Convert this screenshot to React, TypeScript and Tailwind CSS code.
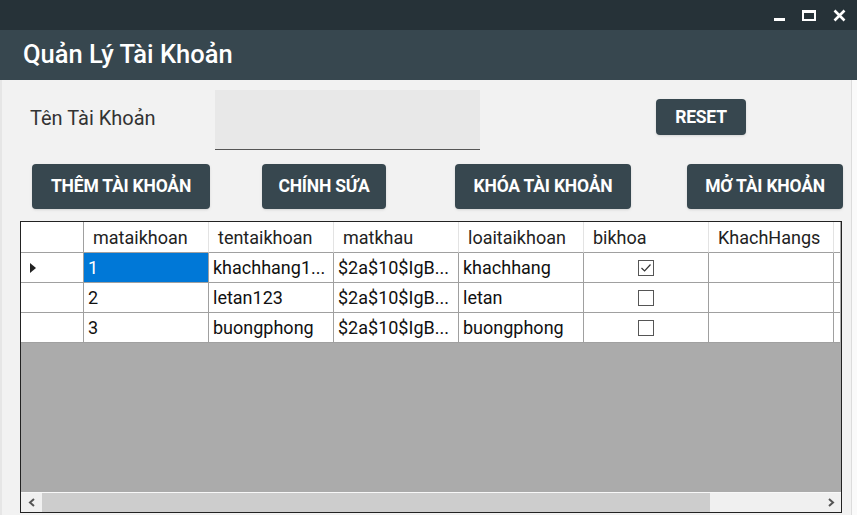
import React from "react";

const columns = ["mataikhoan", "tentaikhoan", "matkhau", "loaitaikhoan", "bikhoa", "KhachHangs"];

const rows = [
  { id: "1", ten: "khachhang1...", mk: "$2a$10$IgB...", loai: "khachhang", khoa: true },
  { id: "2", ten: "letan123", mk: "$2a$10$IgB...", loai: "letan", khoa: false },
  { id: "3", ten: "buongphong", mk: "$2a$10$IgB...", loai: "buongphong", khoa: false },
];

const Checkbox = ({ checked }: { checked: boolean }) => (
  <div className="w-[16px] h-[16px] border border-[#555] bg-white flex items-center justify-center">
    {checked && (
      <svg width="12" height="12" viewBox="0 0 12 12">
        <path d="M1.5 6 L4.6 9 L10.5 2.5" fill="none" stroke="#333" strokeWidth="1.2" />
      </svg>
    )}
  </div>
);

const Btn = ({ label, className }: { label: string; className: string }) => (
  <button
    className={`h-[45px] rounded-[4px] bg-[#37474f] text-white text-[17.5px] font-bold tracking-[-0.2px] shadow-sm flex items-center justify-center ${className}`}
  >
    {label}
  </button>
);

export default function App() {
  const cell = "border-r border-b border-[#a0a0a0] h-[30px] flex items-center px-[4px] text-[18px] text-[#111] whitespace-nowrap overflow-hidden";
  return (
    <div
      className="w-[857px] h-[515px] overflow-hidden bg-[#f2f2f2] flex flex-col relative"
      style={{ fontFamily: "Roboto, 'Noto Sans', sans-serif" }}
    >
      {/* title bar */}
      <div className="h-[30px] bg-[#263238] flex items-center justify-end pr-[11px] shrink-0">
        <div className="w-[11px] h-[3px] bg-white mt-[9px] mr-[17px]" />
        <div className="w-[14px] h-[11px] border-2 border-t-[3px] border-white mr-[17px]" />
        <svg width="13" height="13" viewBox="0 0 13 13">
          <path d="M1.5 1.5 L11.5 11.5 M11.5 1.5 L1.5 11.5" stroke="white" strokeWidth="2.6" />
        </svg>
      </div>

      {/* header */}
      <div className="h-[50px] bg-[#37474f] flex items-center pl-[23px] pb-[1px] shrink-0">
        <span className="text-white text-[25.5px] font-medium">Quản Lý Tài Khoản</span>
      </div>

      <div className="flex flex-col border-l-2 border-[#e6e6e6] flex-1 mr-[6px]">
        {/* input row */}
        <div className="flex items-start mt-[10px] h-[60px]">
          <div className="ml-[28px] w-[185px] h-[55px] flex items-center text-[20px] text-[#333]">Tên Tài Khoản</div>
          <div className="w-[265px] h-[60px] bg-[#e8e8e8] border-b border-[#555]" />
          <Btn label="RESET" className="ml-[176px] mt-[9px] w-[90px] !h-[36px]" />
        </div>

        {/* buttons row */}
        <div className="flex mt-[14px]">
          <Btn label="THÊM TÀI KHOẢN" className="ml-[30px] w-[178px]" />
          <Btn label="CHÍNH SỨA" className="ml-[52px] w-[124px]" />
          <Btn label="KHÓA TÀI KHOẢN" className="ml-[69px] w-[176px]" />
          <Btn label="MỞ TÀI KHOẢN" className="ml-[56px] w-[156px]" />
        </div>

        {/* data grid */}
        <div className="ml-[18px] mt-[12px] w-[822px] h-[292px] border border-[#222] bg-[#ababab] flex flex-col overflow-hidden">
          <div className="flex-1 overflow-hidden">
            <div className="grid grid-cols-[63px_125px_125px_125px_125px_125px_125px_6px] bg-white w-fit">
              <div className="h-[31px] border-r border-b border-[#a0a0a0]" />
              {columns.map((c) => (
                <div key={c} className="h-[31px] border-r border-b border-[#a0a0a0] border-r-[#e3e3e3] flex items-center px-[9px] text-[18px] text-[#222]">
                  {c}
                </div>
              ))}
              <div className="h-[31px] border-b border-[#a0a0a0]" />
              {rows.map((r, i) => (
                <React.Fragment key={r.id}>
                  <div className="border-r border-b border-[#a0a0a0] h-[30px] flex items-center pl-[9px]">
                    {i === 0 && (
                      <svg width="7" height="10" viewBox="0 0 7 10">
                        <path d="M0 0 L6 5 L0 10 Z" fill="#222" />
                      </svg>
                    )}
                  </div>
                  <div className={`${cell} ${i === 0 ? "bg-[#0078d7] text-white" : ""}`}>{r.id}</div>
                  <div className={cell}>{r.ten}</div>
                  <div className={cell}>{r.mk}</div>
                  <div className={cell}>{r.loai}</div>
                  <div className={`${cell} justify-center`}>
                    <Checkbox checked={r.khoa} />
                  </div>
                  <div className={cell} />
                  <div className="border-b border-[#a0a0a0] h-[30px]" />
                </React.Fragment>
              ))}
            </div>
          </div>
          {/* horizontal scrollbar */}
          <div className="h-[20px] bg-[#f0f0f0] border-t border-[#f8f8f8] flex items-center shrink-0">
            <div className="w-[21px] h-full flex items-center justify-center">
              <svg width="8" height="9" viewBox="0 0 8 9">
                <path d="M6 1 L2 4.5 L6 8" fill="none" stroke="#555" strokeWidth="2" />
              </svg>
            </div>
            <div className="w-[668px] h-full bg-[#cdcdcd]" />
            <div className="flex-1" />
            <div className="w-[21px] h-full flex items-center justify-center">
              <svg width="8" height="9" viewBox="0 0 8 9">
                <path d="M2 1 L6 4.5 L2 8" fill="none" stroke="#555" strokeWidth="2" />
              </svg>
            </div>
          </div>
        </div>
      </div>
      <div className="absolute right-0 top-[80px] bottom-0 w-[6px] bg-[#fafafa] border-l border-[#dcdcdc]" />
    </div>
  );
}
